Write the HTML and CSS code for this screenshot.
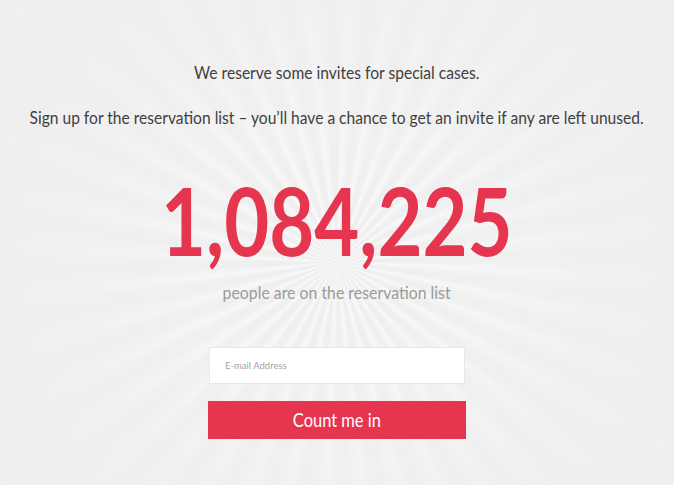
FILE: index.html
```html
<!DOCTYPE html>
<html lang="en">
<head>
<meta charset="utf-8">
<title>Reservation list</title>
<link rel="stylesheet" href="styles.css">
</head>
<body>
<main class="page">
  <p class="lead squeeze">We reserve some invites for special cases.</p>
  <p class="lead lead-second squeeze">Sign up for the reservation list – you’ll have a chance to get an invite if any are left unused.</p>
  <div class="count">1,084,225</div>
  <p class="count-label">people are on the reservation list</p>
  <form class="signup">
    <input class="email" type="email" placeholder="E-mail Address">
    <button class="submit" type="button"><span class="squeeze">Count me in</span></button>
  </form>
</main>
</body>
</html>
```

FILE: styles.css
```css
html, body {
  margin: 0;
  padding: 0;
  height: 100%;
}

body {
  font-family: Lato, "Open Sans", sans-serif;
  color: #444;
  background-color: #efefef;
  background-image:
    radial-gradient(circle at 50% 54%, rgba(244,244,244,0) 0, rgba(241,241,241,0.5) 35%, rgba(239,239,239,0.95) 75%),
    repeating-conic-gradient(from 2deg at 50% 54%, #fbfbfb 0deg, #f6f6f6 2deg, #eeeeee 4.5deg, #efefef 7deg, #f8f8f8 9deg);
  overflow: hidden;
}

.page {
  display: flex;
  flex-direction: column;
  align-items: center;
  padding-top: 60px;
}

.squeeze {
  display: inline-block;
  transform: scaleX(0.866);
  transform-origin: center;
}

.lead {
  margin: 0;
  font-size: 18px;
  line-height: 24px;
  white-space: nowrap;
  color: #404040;
}

.lead-second {
  margin-top: 21px;
}

.count {
  margin-top: 44px;
  font-size: 94px;
  line-height: 94px;
  font-weight: 700;
  color: #e5354f;
  white-space: nowrap;
  transform: scaleX(0.826);
}

.count-label {
  margin: 14px 0 0;
  font-size: 18px;
  line-height: 22px;
  color: #9b9b9b;
  white-space: nowrap;
  transform: scaleX(0.88);
}

.signup {
  margin-top: 44px;
  display: flex;
  flex-direction: column;
  align-items: center;
  gap: 17px;
}

.email {
  box-sizing: border-box;
  width: 256px;
  height: 37px;
  margin: 0;
  padding: 0 15px;
  border: 1px solid #e8e8e8;
  background: #fff;
  font-family: Lato, sans-serif;
  font-size: 9.5px;
  color: #444;
  outline: none;
}

.email::placeholder {
  color: #a3a3a3;
}

.submit {
  box-sizing: border-box;
  width: 258px;
  height: 38px;
  margin: 0;
  padding: 0;
  border: 0;
  background: #e6354f;
  color: #fff;
  font-family: Lato, sans-serif;
  font-size: 19px;
  line-height: 38px;
  cursor: pointer;
}
```
